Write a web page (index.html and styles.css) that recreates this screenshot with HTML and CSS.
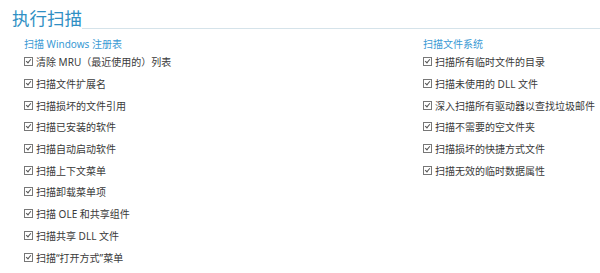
FILE: index.html
```html
<!DOCTYPE html>
<html>

<head>
  <title>执行扫描</title>
  <link rel="stylesheet" href="styles.css">
</head>

<body>
  <header class="Scan-Header">
    <h1 class="Scan-Title">执行扫描</h1>
    <div class="Scan-Rule"></div>
  </header>
  <div class="Scan-Columns">
    <div class="Scan-Group">
      <h4>扫描 Windows 注册表</h4>
      <ul>
        <li><span class="box"></span>清除 MRU（最近使用的）列表</li>
        <li><span class="box"></span>扫描文件扩展名</li>
        <li><span class="box"></span>扫描损坏的文件引用</li>
        <li><span class="box"></span>扫描已安装的软件</li>
        <li><span class="box"></span>扫描自动启动软件</li>
        <li><span class="box"></span>扫描上下文菜单</li>
        <li><span class="box"></span>扫描卸载菜单项</li>
        <li><span class="box"></span>扫描 OLE 和共享组件</li>
        <li><span class="box"></span>扫描共享 DLL 文件</li>
        <li><span class="box"></span>扫描“打开方式”菜单</li>
      </ul>
    </div>
    <div class="Scan-Group">
      <h4>扫描文件系统</h4>
      <ul>
        <li><span class="box"></span>扫描所有临时文件的目录</li>
        <li><span class="box"></span>扫描未使用的 DLL 文件</li>
        <li><span class="box"></span>深入扫描所有驱动器以查找垃圾邮件</li>
        <li><span class="box"></span>扫描不需要的空文件夹</li>
        <li><span class="box"></span>扫描损坏的快捷方式文件</li>
        <li><span class="box"></span>扫描无效的临时数据属性</li>
      </ul>
    </div>
  </div>
</body>

</html>
```

FILE: styles.css
```css
body, html {
  margin: 0;
  padding: 0;
}

body {
  background: #fff;
  font-family: "Noto Sans", "Noto Sans CJK SC", sans-serif;
  color: #3a3a3a;
}

.Scan-Header {
  display: flex;
  align-items: flex-end;
  padding: 7px 0 0 12px;
}

.Scan-Title {
  margin: 0;
  font-family: "Noto Sans CJK SC", sans-serif;
  font-size: 17.5px;
  font-weight: normal;
  line-height: 22px;
  color: #2f8fc4;
}

.Scan-Rule {
  flex: 1;
  height: 0;
  border-bottom: 1px solid #d5e3ea;
  margin-bottom: 0;
}

.Scan-Columns {
  display: grid;
  grid-template-columns: 399px 1fr;
  padding: 8px 0 0 24px;
}

.Scan-Group h4 {
  margin: 0;
  font-size: 10px;
  font-weight: normal;
  line-height: 14px;
  color: #3a9ad4;
}

.Scan-Group ul {
  list-style: none;
  margin: 0;
  padding: 0;
}

.Scan-Group li {
  display: flex;
  align-items: center;
  height: 21.7px;
  font-size: 10px;
  white-space: nowrap;
}

/* little checked box drawn in css */
.box {
  position: relative;
  width: 7px;
  height: 7px;
  border: 1px solid #777;
  margin-right: 3px;
  flex: none;
}

.box::after {
  content: "";
  position: absolute;
  left: 2px;
  top: 0;
  width: 2px;
  height: 4px;
  border-right: 1px solid #555;
  border-bottom: 1px solid #555;
  transform: rotate(40deg);
}
```
